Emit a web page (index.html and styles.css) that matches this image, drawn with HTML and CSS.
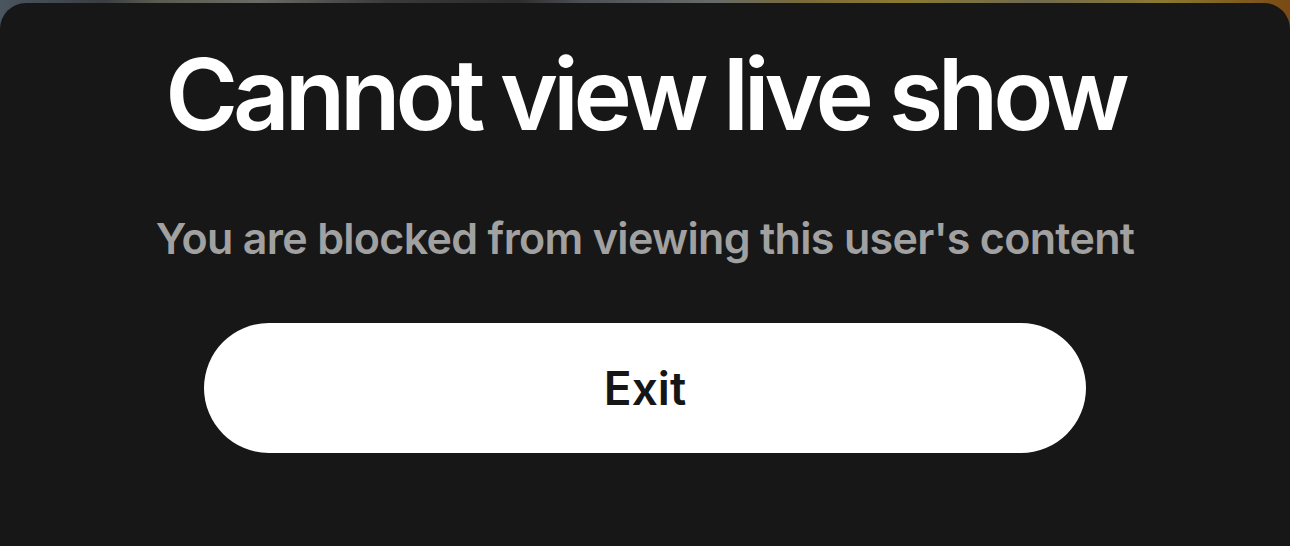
FILE: index.html
```html
<!DOCTYPE html>
<html lang="en">
<head>
<meta charset="utf-8">
<title>Cannot view live show</title>
<link rel="stylesheet" href="styles.css">
</head>
<body>
<div class="backdrop">
  <div class="sheet">
    <h1 class="title">Cannot view live show</h1>
    <p class="subtitle">You are blocked from viewing this user's content</p>
    <button class="exit-btn" type="button">Exit</button>
  </div>
</div>
</body>
</html>
```
FILE: styles.css
```css
html, body {
  margin: 0;
  padding: 0;
  height: 100%;
  background: #171717;
  overflow: hidden;
}

.backdrop {
  height: 100%;
  display: flex;
  flex-direction: column;
  background: linear-gradient(90deg,
    #4a5560 0%, #3a3e42 8%, #5a5a50 12%, #6a6a66 20%, #3a3a3a 30%,
    #2c2c2c 40%, #4c5054 45%, #666a6a 55%, #7a6a3a 62%, #8a7a30 70%,
    #706a50 80%, #8a7a30 90%, #7a4a14 100%);
}

.sheet {
  flex: 1;
  margin-top: 3px;
  background: #171717;
  border-radius: 26px 26px 0 0;
  display: flex;
  flex-direction: column;
  align-items: center;
  font-family: Inter, "Noto Sans", sans-serif;
}

.title {
  margin: 31px 0 0;
  font-size: 99px;
  font-weight: 600;
  line-height: 120px;
  color: #ffffff;
  letter-spacing: -5.2px;
}

.subtitle {
  margin: 58px 0 0;
  font-size: 43px;
  font-weight: 560;
  line-height: 52px;
  color: #a1a1a1;
  letter-spacing: -0.68px;
}

.exit-btn {
  margin-top: 59px;
  width: 882px;
  height: 130px;
  border: none;
  border-radius: 65px;
  background: #ffffff;
  color: #161616;
  font-family: Inter, "Noto Sans", sans-serif;
  font-size: 46px;
  font-weight: 600;
  cursor: pointer;
}
```
